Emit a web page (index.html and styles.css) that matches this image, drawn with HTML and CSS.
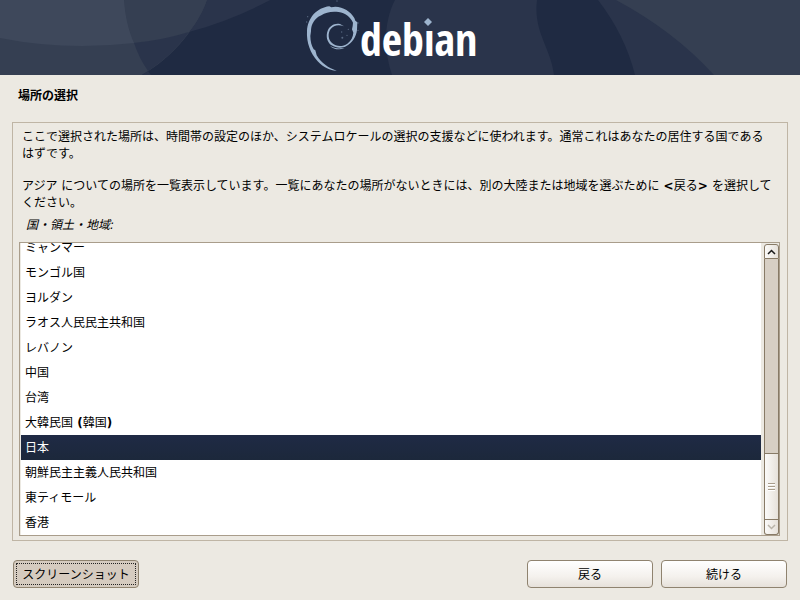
FILE: index.html
```html
<!DOCTYPE html>
<html lang="ja">
<head>
<meta charset="utf-8">
<title>場所の選択</title>
<link rel="stylesheet" href="styles.css">
</head>
<body>
<header class="banner">
  <svg class="banner-art" viewBox="0 0 800 75" preserveAspectRatio="xMidYMid slice" role="img" aria-label="debian">
    <rect width="800" height="75" fill="#1f2a42"/>
    <path d="M0 0H270Q170 46 82 46Q40 46 0 38Z" fill="#2a344b"/>
    <path d="M0 0H207C198 25 175 56 142 75H0Z" fill="#353f52"/>
    <path d="M124 0H270Q233 20 189 32C198 21 204 9 207 0Z" fill="#2a344b"/>
    <path d="M124 0H207C204 9 198 21 189 32Q163 40 134 43C128 29 125 15 124 0Z" fill="#353f52"/>
    <path d="M0 0H124C125 15 128 29 134 43Q108 46 82 46Q40 46 0 38Z" fill="#3e485b"/>
    <path d="M134 43Q163 40 189 32C179 46 165 60 148 71Q139 58 134 43Z" fill="#2a344b"/>
    <path d="M142 75L148 71L151 75Z" fill="#2a344b"/>
    <path d="M395 0C383 23 384 52 392 75H554C551 48 533 32 537 0Z" fill="#2a344b"/>
    <path d="M598 0Q625 35 635 75H800V0Z" fill="#2a344b"/>
    <path d="M616 0Q674 31 714 75H800V0Z" fill="#353f52"/>
    <g transform="translate(302 0) scale(.3333)" fill="#9db4ce">
      <path d="M104 212C88 213 66 204 47 184C25 160 13 127 15 94C17 53 45 23 82 19L88 22L100 20C124 21 146 34 157 54L160 62L166 67L165 90C163 111 149 130 132 139C119 146 101 144 89 136C75 127 71 108 77 92C83 77 99 68 114 72L126 79C110 72 94 76 86 87C77 99 78 119 90 129C102 140 122 141 136 131C148 122 153 110 154 98L150 88L152 78L153 68C145 51 130 39 110 36C89 33 71 37 58 46L49 50C34 61 27 76 27 94L25 108C25 124 29 138 35 148L40 151L44 166C57 188 80 205 104 212Z"/>
      <path d="M84 137C95 149 113 150 128 145L117 145C104 146 94 143 84 137Z"/>
      <g opacity=".45">
        <circle cx="105" cy="3" r="2"/><circle cx="17" cy="50" r="2"/><circle cx="14" cy="66" r="2"/>
        <circle cx="119" cy="96" r="2"/><circle cx="139" cy="88" r="2"/><circle cx="135" cy="106" r="2"/>
        <circle cx="121" cy="113" r="3"/><circle cx="168" cy="69" r="2"/><circle cx="168" cy="91" r="2"/>
      </g>
    </g>
    <text class="wordmark" x="360" y="56">debıan</text>
    <path d="M428 18l4 4-4 4-4-4z" fill="#9db4ce"/>
  </svg>
</header>
<main class="page">
  <h1 class="title">場所の選択</h1>
  <section class="panel">
    <p class="intro">ここで選択された場所は、時間帯の設定のほか、システムロケールの選択の支援などに使われます。通常これはあなたの居住する国である<span class="phrase">はずです。</span></p>
    <p class="intro">アジア についての場所を一覧表示しています。一覧にあなたの場所がないときには、別の大陸または地域を選ぶために<b> &lt;</b>戻る<b>&gt; </b>を選択してください。</p>
    <h2 class="caption" id="caption">国・領土・地域:</h2>
    <div class="listbox">
      <ul class="rows" id="rows" role="listbox" aria-labelledby="caption" tabindex="0">
        <li role="option">ミャンマー</li>
        <li role="option">モンゴル国</li>
        <li role="option">ヨルダン</li>
        <li role="option">ラオス人民民主共和国</li>
        <li role="option">レバノン</li>
        <li role="option">中国</li>
        <li role="option">台湾</li>
        <li role="option">大韓民国<b> (</b>韓国<b>)</b></li>
        <li role="option" aria-selected="true">日本</li>
        <li role="option">朝鮮民主主義人民共和国</li>
        <li role="option">東ティモール</li>
        <li role="option">香港</li>
      </ul>
      <div class="scrollbar">
        <button class="step step-up" type="button" aria-label="上へ"><svg width="9" height="6" viewBox="0 0 9 6"><path d="M1 5L4.500 1.500L8 5" fill="none" stroke="#1a1a1a" stroke-width="1.500"/></svg></button>
        <div class="track"><div class="thumb"><i></i><i></i><i></i></div></div>
        <button class="step step-down" type="button" aria-label="下へ" disabled><svg width="9" height="6" viewBox="0 0 9 6"><path d="M1 1L4.500 4.500L8 1" fill="none" stroke="#b9b4a9" stroke-width="1.500"/></svg></button>
      </div>
    </div>
  </section>
  <footer class="actions">
    <button class="button button-focus" type="button">スクリーンショット</button>
    <span class="spacer"></span>
    <button class="button" type="button">戻る</button>
    <button class="button" type="button">続ける</button>
  </footer>
</main>
<script src="list.js"></script>
</body>
</html>
```
FILE: list.js
```js
const rows = document.getElementById("rows");
rows.scrollTop = rows.scrollHeight;
```
FILE: styles.css
```css
* { box-sizing: border-box; }

body {
  margin: 0;
  min-height: 100vh;
  display: flex;
  flex-direction: column;
  background: #ece9e2;
  color: #000;
  font: 12px/17px "DejaVu Sans", "Noto Sans CJK JP", sans-serif;
}

b { font-weight: 700; }

.banner { background: #1f2a42; }
.banner-art { display: block; width: 100%; height: 75px; }
.wordmark {
  font: 700 44px "Open Sans Condensed", "Liberation Sans Narrow", sans-serif;
  fill: #fff;
}

.page {
  flex: 1;
  display: flex;
  flex-direction: column;
  padding: 13px 12px 12px;
}

.title { margin: 0 6px 17px; font-size: 12px; line-height: 17px; }

.panel {
  flex: 1;
  display: flex;
  flex-direction: column;
  padding: 6px 7px 4px 6px;
  border: 1px solid #bfb5a5;
}

.intro { margin: 0 3px 15px; }
.intro + .intro { margin-bottom: 5px; }
.phrase { white-space: nowrap; }
.caption { margin: 0 7px 8px; font-size: 12px; font-weight: 400; font-style: italic; }

.listbox {
  flex: 1;
  display: flex;
  padding: 0 0 0 1px;
  border: 1px solid #a99d8b;
}
.rows {
  flex: 1;
  height: 292px;
  margin: 0;
  padding: 0;
  overflow-y: auto;
  scrollbar-width: none;
  list-style: none;
  background: #fff;
  outline: none;
}
.rows li { height: 25px; padding: 2px 4px 0; line-height: 23px; }
.rows [aria-selected="true"] {
  background: linear-gradient(#1f2a45, #1c283b);
  color: #fff;
}

.scrollbar {
  display: flex;
  flex-direction: column;
  width: 15px;
  margin: 1px 0 0 3px;
}
.step {
  display: flex;
  align-items: center;
  justify-content: center;
  height: 15px;
  padding: 0;
  border: 1px solid #877a66;
  background: linear-gradient(90deg, #fbfaf8, #e6e1da);
}
.step-up { border-radius: 3px 3px 0 0; }
.step-down { border-radius: 0 0 3px 3px; border-top: 0; }
.track {
  flex: 1;
  display: flex;
  flex-direction: column;
  justify-content: flex-end;
  border: solid #877a66;
  border-width: 0 1px;
  background: #d7cfc4;
}
.thumb {
  display: flex;
  flex-direction: column;
  align-items: center;
  justify-content: center;
  gap: 1px;
  height: 67px;
  border: solid #877a66;
  border-width: 1px 0;
  background: linear-gradient(90deg, #fbfaf8, #e6e1da);
}
.thumb i { width: 7px; height: 2px; border-top: 1px solid #a99d8b; background: #fff; }

.actions { display: flex; gap: 8px; margin: 19px 1px 0; }
.spacer { flex: 1; }
.button {
  width: 126px;
  height: 28px;
  padding: 2px 0 0;
  border: 1px solid #8f836f;
  border-radius: 4px;
  background: linear-gradient(#fff, #f4f1ed 60%, #e6e1da);
  color: #000;
  font: inherit;
}
.button-focus {
  background: #d5cbbf;
  outline: 1px dotted #222;
  outline-offset: -4px;
}
```
